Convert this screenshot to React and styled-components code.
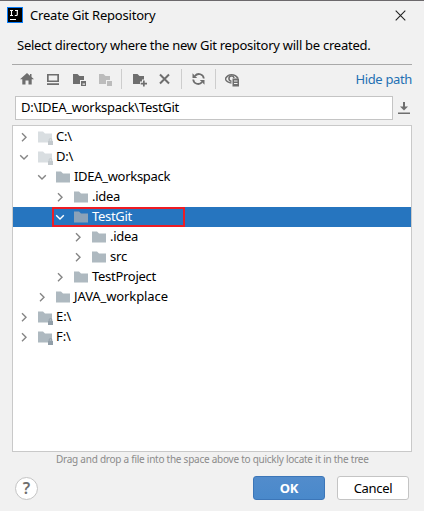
import React from 'react';
import styled, { createGlobalStyle, css } from 'styled-components';

const Global = createGlobalStyle`
  * { box-sizing: border-box; }
  body { margin: 0; background: #f1f1f1; }
`;

const Dialog = styled.div`
  width: 424px;
  height: 511px;
  overflow: hidden;
  display: flex;
  flex-direction: column;
  background: #f1f1f1;
  border-top: 1px solid #6c696c;
  color: #000;
  font: 13px/20px 'Noto Sans', 'Open Sans', sans-serif;
  white-space: pre;
`;

const Text = styled.span`
  letter-spacing: ${(p) => p.$track || 0}px;
`;

const TitleBar = styled.header`
  height: 29px;
  flex: none;
  display: flex;
  align-items: center;
  padding: 0 18px 1px 7px;
`;

const Title = styled(Text)`
  flex: 1;
  margin-left: 7px;
`;

const Message = styled.p`
  height: 35px;
  flex: none;
  margin: 0 12px;
  padding: 5px 0 0 5px;
  border-bottom: 1px solid #a9a9a9;
`;

const Toolbar = styled.div`
  height: 31px;
  flex: none;
  display: flex;
  align-items: center;
  padding: 0 12px 3px 19px;
`;

const Tool = styled.svg`
  width: 16px;
  height: 16px;
  flex: none;
  margin-right: 10px;
  fill: ${(p) => (p.$disabled ? '#bcbcbc' : '#6e6e6e')};
`;

const Divider = styled.i`
  width: 1px;
  height: 20px;
  flex: none;
  margin: 0 9px 0 -2px;
  background: #cdcdcd;
`;

const Link = styled.a`
  margin-left: auto;
  color: #2470b3;
`;

const PathRow = styled.div`
  height: 24px;
  flex: none;
  display: flex;
  align-items: center;
  justify-content: space-between;
  padding: 0 14px 0 15px;
`;

const PathField = styled.div`
  width: 378px;
  height: 24px;
  padding: 0 5px;
  border: 1px solid #c4c4c4;
  background: #fff;
`;

const Tree = styled.div`
  height: 327px;
  flex: none;
  margin: 5px 12px 0;
  padding-top: 1px;
  border: 1px solid #c9c9c9;
  background: #fff;
`;

const Row = styled.div`
  position: relative;
  height: 20px;
  display: flex;
  align-items: center;
  padding-left: ${(p) => 5 + p.$depth * 18}px;
  ${(p) => p.$selected && css`
    background: #2675bf;
    color: #fff;
  `}
`;

const Label = styled(Text)`
  padding-bottom: 2px;
`;

const Chevron = styled.svg`
  width: 12px;
  height: 12px;
  margin: 0 7px 1px 0;
  fill: none;
  stroke: ${(p) => (p.$selected ? '#fff' : '#858585')};
  stroke-width: 1.4;
`;

const Folder = styled.svg`
  width: 16px;
  height: 16px;
  margin-right: 3px;
  fill: ${(p) => p.$color};
`;

const Highlight = styled.div`
  position: absolute;
  left: 39px;
  top: 0;
  width: 133px;
  height: 20px;
  border: 2px solid #ed1c24;
`;

const Hint = styled.p`
  height: 16px;
  flex: none;
  margin: 0 0 0 56px;
  color: #8b8b8b;
  font-size: 10px;
  line-height: 14px;
`;

const Footer = styled.footer`
  display: flex;
  align-items: center;
  height: 24px;
  margin-top: 8px;
  padding: 0 15px;
`;

const Help = styled.button`
  width: 23px;
  height: 23px;
  margin-right: auto;
  padding: 0;
  border: 1px solid #c4c4c4;
  border-radius: 50%;
  background: #fff;
  color: #6e6e6e;
  font: 600 16px/20px 'Noto Sans', sans-serif;
`;

const Button = styled.button`
  width: 72px;
  height: 24px;
  margin-left: 12px;
  padding: 0 0 1px;
  border: 1px solid ${(p) => (p.$primary ? '#3c76b8' : '#c4c4c4')};
  border-radius: 3px;
  background: ${(p) => (p.$primary ? 'linear-gradient(#528ccc, #4989cb)' : '#fff')};
  color: ${(p) => (p.$primary ? '#fff' : '#000')};
  font: ${(p) => (p.$primary ? 700 : 400)} 13px/20px 'Noto Sans', sans-serif;
  letter-spacing: -0.3px;
`;

const folderShape = 'M1 2.5h5l2 2h7v9H1z';

const nodes = [
  { name: 'C:\\', depth: 0, drive: true, dim: true, track: -0.2 },
  { name: 'D:\\', depth: 0, drive: true, dim: true, open: true, track: -0.2 },
  { name: 'IDEA_workspack', depth: 1, open: true, track: -0.3 },
  { name: '.idea', depth: 2, track: -0.3 },
  { name: 'TestGit', depth: 2, open: true, selected: true, track: -0.3 },
  { name: '.idea', depth: 3, track: -0.3 },
  { name: 'src', depth: 3, track: -0.2 },
  { name: 'TestProject', depth: 2, track: -0.28 },
  { name: 'JAVA_workplace', depth: 1, track: -0.1 },
  { name: 'E:\\', depth: 0, drive: true, track: -0.1 },
  { name: 'F:\\', depth: 0, drive: true, track: -0.1 },
];

function TreeRow({ node }) {
  const { name, depth, drive, dim, open, selected, track } = node;
  const color = dim ? '#d9dee1' : selected ? '#8ba2b8' : '#aeb9c0';
  const lock = dim ? '#c3c9cd' : '#929fa9';
  return (
    <Row $depth={depth} $selected={selected}>
      <Chevron $selected={selected} viewBox="0 0 12 12">
        <path d={open ? 'M2.2 4.2L6 8l3.8-3.8' : 'M4 2.2L8 6.2l-4 4'} />
      </Chevron>
      <Folder $color={color} viewBox="0 0 16 16">
        <path d={folderShape} />
        {drive && (
          <g fill={lock}>
            <path d="M11 12h5v4h-5z" />
            <path d="M12.2 12.2v-1.4a1.3 1.3 0 0 1 2.6 0v1.4" fill="none" stroke={lock} />
          </g>
        )}
      </Folder>
      <Label $track={track}>{name}</Label>
      {selected && <Highlight />}
    </Row>
  );
}

function FolderTool({ disabled }) {
  return (
    <Tool $disabled={disabled} viewBox="0 0 16 16">
      <path d="M2 3h4.500l2 2H13v4H9v4H2z" />
      <path fillRule="evenodd" d={disabled ? 'M10 10h5v5h-5z' : 'M10 10h5v5h-5zm1.500 2.500v1.200H14v-1.200z'} />
    </Tool>
  );
}

export default function App() {
  return (
    <>
      <Global />
      <Dialog>
        <TitleBar>
          <svg width="16" height="16" viewBox="0 0 16 16">
            <path fill="#087cfa" d="M0 0h16v16H0z" />
            <path d="M1 1h14v14H1z" />
            <path d="M3 3.500h3M4.500 3.500v5M3 8.500h3M8 3.500h3M10.300 3.500v4q0 1-1 1H7.800M3 12.500h6" fill="none" stroke="#fff" strokeWidth="1.100" />
          </svg>
          <Title $track={-0.2}>Create Git Repository</Title>
          <svg width="11" height="11" viewBox="0 0 11 11" stroke="#222" strokeWidth="1.100">
            <path d="M.7.7l9.600 9.600M10.300.7L.7 10.300" />
          </svg>
        </TitleBar>
        <Message><Text $track={-0.26}>Select directory where the new Git repository will be created.</Text></Message>
        <Toolbar>
          <Tool viewBox="0 0 16 16"><path d="M8 2l3 2.700V3h1.500v3L15 8.300h-2.300V13.500H9.500V9.500h-3v4H3.300V8.300H1z" /></Tool>
          <Tool viewBox="0 0 16 16"><path fillRule="evenodd" d="M2 3h12v8H2zm1.700 1.600v4.800h8.600V4.600zM2 12.300h12v1.600H2z" /></Tool>
          <FolderTool />
          <FolderTool disabled />
          <Divider />
          <Tool viewBox="0 0 16 16">
            <path d="M2 3h4.500l2 2H13v3.500h-2v2H9V13H2z" />
            <path d="M12 9.500h1.700v2.200H16v1.700h-2.300v2.200H12v-2.200H9.700v-1.700H12z" />
          </Tool>
          <Tool viewBox="0 0 16 16"><path d="M3 3.500l9 9M12 3.500l-9 9" stroke="#6e6e6e" strokeWidth="2" /></Tool>
          <Divider />
          <Tool viewBox="0 0 16 16">
            <path d="M12.800 7.500A5 5 0 0 0 4 4.800M2.200 8.500A5 5 0 0 0 11 11.200" fill="none" stroke="#6e6e6e" strokeWidth="1.800" />
            <path d="M1.500 2.300V7h4.700zM13.500 13.700V9H8.800z" />
          </Tool>
          <Divider />
          <Tool viewBox="0 0 16 16">
            <path d="M6.500 12Q2 11.500 .3 8 2.200 3.700 6.500 3.700T13 7.500" fill="none" stroke="#6e6e6e" strokeWidth="1.600" />
            <path d="M6.500 10.200A2.600 2.600 0 1 1 9.100 7" fill="none" stroke="#6e6e6e" strokeWidth="1.600" />
            <path fillRule="evenodd" d="M7.500 7.500h6.500V15.500H7.500zM9 9.500v1h3.500v-1zM9 12v1h3.500v-1z" />
          </Tool>
          <Link><Text $track={-0.35}>Hide path</Text></Link>
        </Toolbar>
        <PathRow>
          <PathField><Text $track={-0.28}>D:\IDEA_workspack\TestGit</Text></PathField>
          <svg width="12" height="13" viewBox="0 0 12 13" fill="#6e6e6e">
            <path d="M5 0h2v4.500h3L6 8.500l-4-4h3zM0 10.500h12V12H0z" />
          </svg>
        </PathRow>
        <Tree>
          {nodes.map((node, i) => <TreeRow key={i} node={node} />)}
        </Tree>
        <Hint><Text $track={-0.25}>Drag and drop a file into the space above to quickly locate it in the tree</Text></Hint>
        <Footer>
          <Help>?</Help>
          <Button $primary>OK</Button>
          <Button>Cancel</Button>
        </Footer>
      </Dialog>
    </>
  );
}
